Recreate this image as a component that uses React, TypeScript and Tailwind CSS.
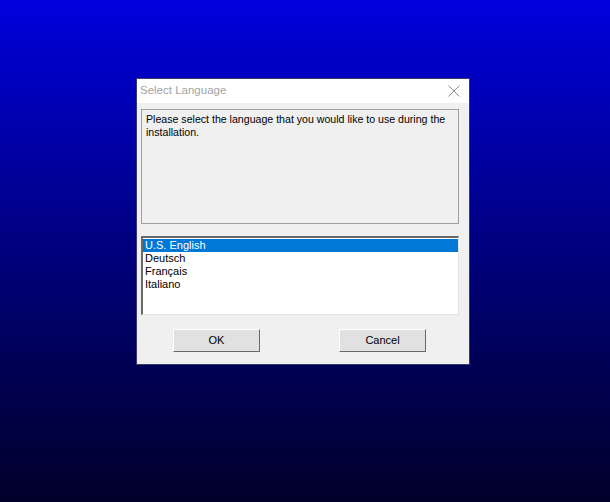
import { useState } from "react";

const languages = ["U.S. English", "Deutsch", "Français", "Italiano"];

export default function App() {
  const [selected, setSelected] = useState(0);

  return (
    <div className="h-[502px] w-full bg-gradient-to-b from-[#0000de] to-[#00002a] pl-[136px] pt-[78px] font-['Liberation_Sans',Arial,sans-serif]">
      {/* Dialog */}
      <div className="w-[334px] h-[287px] bg-[#f0f0f0] border border-[#3a3a6a] flex flex-col">
        {/* Title bar */}
        <div className="h-[24px] bg-white flex items-center justify-between pl-[3px] pr-[9px]">
          <span className="text-[11.5px] text-[#a3a3a3]">Select Language</span>
          <svg width="12" height="12" viewBox="0 0 12 12" className="text-[#8a8a8a]">
            <path d="M0.5 0.5 L11.5 11.5 M11.5 0.5 L0.5 11.5" stroke="currentColor" strokeWidth="1" />
          </svg>
        </div>

        <div className="pl-[4px] pt-[6px] flex flex-col">
          {/* Message */}
          <div className="w-[318px] h-[115px] border border-[#a0a0a0] bg-[#f0f0f0] px-[4px] pt-[3px] text-[10.6px] leading-[13px] text-black">
            Please select the language that you would like to use during the installation.
          </div>

          {/* Language list */}
          <div className="w-[318px] mt-[12px] h-[79px] bg-white border-t-2 border-l-2 border-t-[#696969] border-l-[#696969] border-b border-r border-b-[#e3e3e3] border-r-[#e3e3e3] pt-[1px]">
            {languages.map((lang, i) => (
              <div
                key={lang}
                onClick={() => setSelected(i)}
                className={`h-[13px] leading-[13px] text-[11px] px-[2px] cursor-default ${
                  selected === i ? "bg-[#0078d7] text-white" : "text-black"
                }`}
              >
                {lang}
              </div>
            ))}
          </div>

          {/* Buttons */}
          <div className="mt-[14px] flex pl-[32px] gap-[79px]">
            <button className="w-[87px] h-[23px] bg-[#e1e1e1] border border-t-white border-l-white border-b-[#696969] border-r-[#696969] text-[11px] text-black">
              OK
            </button>
            <button className="w-[87px] h-[23px] bg-[#e1e1e1] border border-t-white border-l-white border-b-[#696969] border-r-[#696969] text-[11px] text-black">
              Cancel
            </button>
          </div>
        </div>
      </div>
    </div>
  );
}
